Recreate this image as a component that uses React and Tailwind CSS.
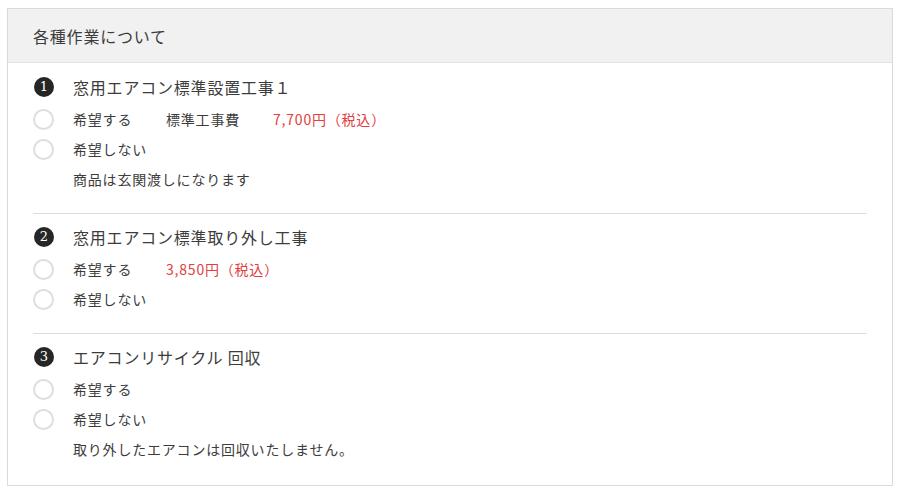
import { useState } from 'react'

const sections = [
  {
    no: 1,
    title: '窓用エアコン標準設置工事１',
    yes: { label: '標準工事費', price: '7,700円（税込）' },
    note: '商品は玄関渡しになります',
  },
  {
    no: 2,
    title: '窓用エアコン標準取り外し工事',
    yes: { price: '3,850円（税込）' },
  },
  {
    no: 3,
    title: 'エアコンリサイクル 回収',
    yes: {},
    note: '取り外したエアコンは回収いたしません。',
  },
]

function Radio({ checked, onClick, children }) {
  return (
    <label onClick={onClick} className="flex items-center h-[30px] cursor-pointer">
      <span className={`w-[21px] h-[21px] rounded-full border-2 bg-white flex items-center justify-center shrink-0 ${checked ? 'border-[#333]' : 'border-[#dedede]'}`}>
        {checked && <span className="w-[9px] h-[9px] rounded-full bg-[#333]" />}
      </span>
      <span className="ml-[19px] flex items-center">{children}</span>
    </label>
  )
}

export default function App() {
  const [picked, setPicked] = useState({})

  return (
    <div className="w-[900px] h-[492px] bg-white pt-[8px] pl-[7px]" style={{ fontFamily: '"Noto Sans CJK JP", "Noto Sans", sans-serif' }}>
      <div className="w-[886px] border border-[#dadada] text-[#3c3c3c] tracking-[0.05em]">
        <div className="h-[54px] bg-[#f1f1f1] border-b border-[#e3e3e3] pl-[25px] flex items-center text-[16px]">
          各種作業について
        </div>
        <div className="px-[25px]">
          {sections.map((s, i) => (
            <div
              key={s.no}
              className={`${i > 0 ? 'border-t border-[#dedede] pt-[8px]' : 'pt-[9px]'} ${i === 2 ? 'pb-[21px]' : 'pb-[19px]'}`}
            >
              <div className="flex items-center h-[30px] mb-[2px]">
                <span
                  className="w-[20px] h-[20px] rounded-full bg-[#262626] text-white flex items-center justify-center text-[13px] ml-px tracking-normal"
                  style={{ fontFamily: 'Georgia, "DejaVu Serif", serif' }}
                >
                  {s.no}
                </span>
                <span className="ml-[19px] text-[16px]">{s.title}</span>
              </div>
              <Radio checked={picked[s.no] === 'yes'} onClick={() => setPicked({ ...picked, [s.no]: 'yes' })}>
                <span className="w-[93px] text-[14px]">希望する</span>
                {s.yes.label && <span className="w-[107px] text-[14px]">{s.yes.label}</span>}
                {s.yes.price && <span className="text-[14px] text-[#e2403f]">{s.yes.price}</span>}
              </Radio>
              <Radio checked={picked[s.no] === 'no'} onClick={() => setPicked({ ...picked, [s.no]: 'no' })}>
                <span className="text-[14px]">希望しない</span>
              </Radio>
              {s.note && (
                <div className="h-[30px] flex items-center pl-[40px] text-[14px]">{s.note}</div>
              )}
            </div>
          ))}
        </div>
      </div>
    </div>
  )
}
